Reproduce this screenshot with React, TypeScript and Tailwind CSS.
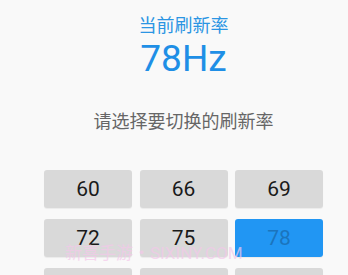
import React from "react";

const rates = [60, 66, 69, 72, 75, 78, 80, 84, 90];

export default function App() {
  return (
    <div
      className="relative w-[348px] h-[275px] overflow-hidden bg-[#f9f9f9]"
      style={{ fontFamily: 'Roboto, "Noto Sans CJK SC", sans-serif' }}
    >
      <div className="flex flex-col items-center pl-[19px]">
        <div className="mt-[14px] h-[24px] leading-[24px] text-[18px] text-[#2b95e3]">当前刷新率</div>
        <div className="mt-0 h-[42px] leading-[42px] text-[37px] text-[#1f8fe6]">78Hz</div>
        <div className="mt-[30px] h-[24px] leading-[24px] text-[18px] text-[#666666]">请选择要切换的刷新率</div>
        <div className="mt-[36px] grid grid-cols-[88px_88px_88px] gap-x-[7.5px] gap-y-[11px]">
          {rates.map((r) => {
            const sel = r === 78;
            return (
              <div
                key={r}
                className={
                  "h-[38px] rounded-[3px] flex items-center justify-center text-[21px] leading-none shadow-[0_1px_1px_rgba(0,0,0,0.06)] " +
                  (sel ? "bg-[#2196f3] text-[#1b74bd]" : "bg-[#d9d9d9] text-[#1a1a1a]")
                }
              >
                {r}
              </div>
            );
          })}
        </div>
      </div>
      <div className="absolute left-[65px] top-[243px] text-[17px] leading-[20px] text-[#f4c8ea] opacity-70 whitespace-nowrap pointer-events-none">
        新喜手游・SIXINY.COM
      </div>
    </div>
  );
}
